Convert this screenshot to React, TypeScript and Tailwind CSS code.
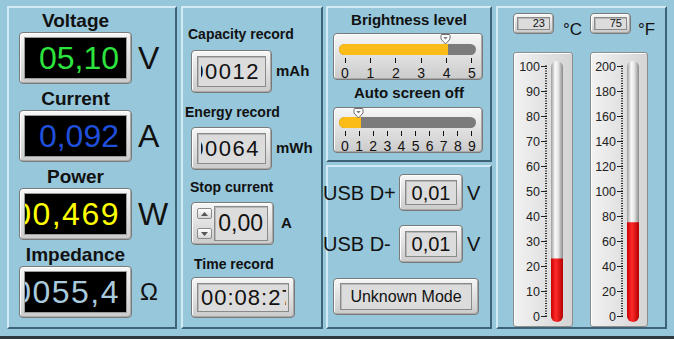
const font = "font-['Liberation_Sans',Arial,sans-serif]";

function Panel({ className = "", children }: { className?: string; children?: React.ReactNode }) {
  return (
    <div
      className={`bg-[#97c7db] border-2 border-t-[#d2eaf4] border-l-[#d2eaf4] border-r-[#3d6377] border-b-[#3d6377] ${className}`}
    >
      {children}
    </div>
  );
}

// grey bevelled frame used by every control
function Frame({ className = "", children }: { className?: string; children?: React.ReactNode }) {
  return (
    <div
      className={`rounded-[4px] border border-[#7a7a7a] bg-linear-to-b from-[#f6f6f6] to-[#cbcbcb] shadow-[inset_1px_1px_0_#ffffff,inset_-1px_-1px_0_#a9a9a9] ${className}`}
    >
      {children}
    </div>
  );
}

const field = "border border-[#8a8a8a] bg-[#dcdcdc] shadow-[inset_1px_1px_0_#b9b9b9]";

function Reading({ label, value, unit, color, unitClass, pad = "pr-[7px]" }: {
  label: string;
  value: string;
  unit: string;
  color: string;
  unitClass: string;
  pad?: string;
}) {
  return (
    <div className="flex flex-col mb-[4px]">
      <div className="w-[113px] text-center text-[19px] font-bold leading-[22px] text-[#111]">{label}</div>
      <div className="flex items-center">
        <Frame className="w-[113px] h-[52px] p-[4px]">
          <div className={`h-full border border-[#9c9c9c] bg-black flex items-center justify-end overflow-hidden ${pad}`}>
            <span className={`text-[32px] leading-none whitespace-nowrap ${color}`}>{value}</span>
          </div>
        </Frame>
        <span className={`ml-[6px] leading-none text-[#111] ${unitClass}`}>{unit}</span>
      </div>
    </div>
  );
}

function ValueBox({ value, w, h, align, text, pad }: {
  value: string;
  w: string;
  h: string;
  align: string;
  text: string;
  pad: string;
}) {
  return (
    <Frame className={`${w} ${h} p-[5px]`}>
      <div className={`h-full ${field} flex`}>
        <div className={`flex-1 overflow-hidden flex items-center ${align} ${pad}`}>
          <span className={`${text} leading-none whitespace-nowrap text-[#111]`}>{value}</span>
        </div>
      </div>
    </Frame>
  );
}

function Thumb() {
  return (
    <svg width="11" height="11" viewBox="0 0 11 11">
      <path d="M1 1.5 Q1 0.5 2 0.5 H9 Q10 0.5 10 1.5 V5 L5.5 10 L1 5 Z" fill="#ffffff" stroke="#6e6e6e" strokeWidth="1" />
      <path d="M3.3 3 H7.7 L5.5 5.6 Z" fill="#7a7a7a" />
    </svg>
  );
}

function Slider({ count, fill, thumb, trackTop, h }: {
  count: number;
  fill: string;
  thumb: string;
  trackTop: string;
  h: string;
}) {
  const labels = Array.from({ length: count }, (_, i) => i);
  return (
    <Frame className={`relative ml-[5px] w-[150px] ${h}`}>
      <div className={`ml-[5px] ${trackTop} w-[137px] h-[11px] rounded-full bg-[#7b7b7b] overflow-hidden`}>
        <div className={`h-full ${fill} bg-[#fbbc17]`} />
      </div>
      <div className="ml-[7px] mr-[6px] mt-[3px] flex justify-between">
        {labels.map((n) => (
          <div key={n} className="w-[8px] flex flex-col items-center">
            <div className="w-px h-[5px] bg-[#111]" />
            <span className="mt-[3px] text-[14px] leading-[14px] text-[#111]">{n}</span>
          </div>
        ))}
      </div>
      <div className={`absolute top-0 ${thumb}`}>
        <Thumb />
      </div>
    </Frame>
  );
}

function Thermo({ id, max, value, labelX }: { id: string; max: number; value: number; labelX: number }) {
  const y0 = 263;
  const span = 250;
  const tx = labelX + 11;
  const top = y0 - (value / max) * span;
  const labels = Array.from({ length: 11 }, (_, i) => i);
  const minors = Array.from({ length: 101 }, (_, i) => i);
  return (
    <svg width="100%" height="100%" className="block">
      <defs>
        <linearGradient id={`${id}-tube`} x1="0" x2="1" y1="0" y2="0">
          <stop offset="0" stopColor="#9c9c9c" />
          <stop offset="0.35" stopColor="#fafafa" />
          <stop offset="0.6" stopColor="#e6e6e6" />
          <stop offset="1" stopColor="#8a8a8a" />
        </linearGradient>
        <linearGradient id={`${id}-red`} x1="0" x2="1" y1="0" y2="0">
          <stop offset="0" stopColor="#c80000" />
          <stop offset="0.4" stopColor="#ff2b2b" />
          <stop offset="1" stopColor="#b50000" />
        </linearGradient>
      </defs>
      {minors.map((i) => (
        <line key={i} x1={labelX + 5} x2={labelX + 7} y1={y0 - i * 2.5} y2={y0 - i * 2.5} stroke="#222" strokeWidth="1" />
      ))}
      {labels.map((i) => (
        <g key={i}>
          <line x1={labelX + 1} x2={labelX + 7} y1={y0 - i * 25 + 0.5} y2={y0 - i * 25 + 0.5} stroke="#222" strokeWidth="1" />
          <text
            x={labelX}
            y={y0 - i * 25 + 1}
            textAnchor="end"
            dominantBaseline="central"
            fontSize="12.5"
            fill="#222"
            fontFamily="Liberation Sans, Arial, sans-serif"
          >
            {(max / 10) * i}
          </text>
        </g>
      ))}
      <rect x={tx} y={8} width={12} height={261} rx={6} fill={`url(#${id}-tube)`} />
      <path d={`M${tx} ${top} H${tx + 12} V263 A6 6 0 0 1 ${tx} 263 Z`} fill={`url(#${id}-red)`} />
    </svg>
  );
}

function TempBox({ value }: { value: string }) {
  return (
    <Frame className="w-[41px] h-[21px] p-[3px] rounded-[3px]">
      <div className={`h-full ${field} flex items-center justify-end pr-[4px]`}>
        <span className="text-[11px] leading-none text-[#111]">{value}</span>
      </div>
    </Frame>
  );
}

const thermoBody =
  "h-[275px] rounded-[3px] border border-[#8d8d8d] bg-linear-to-r from-[#f2f2f2] to-[#d4d4d4] shadow-[inset_1px_1px_0_#ffffff]";

export default function App() {
  return (
    <div className={`w-[674px] h-[339px] bg-[#97c7db] flex flex-col overflow-hidden ${font}`}>
      <div className="flex h-[336px] pt-[6px] pl-[7px]">
        <Panel className="w-[170px] h-[323px] pl-[10px] pt-[2px]">
          <Reading label="Voltage" value="05,10" unit="V" color="text-[#2de33d]" unitClass="text-[32px]" />
          <Reading label="Current" value="0,092" unit="A" color="text-[#1f4fdb]" unitClass="text-[32px]" />
          <Reading
            label="Power"
            value="00,469"
            unit="W"
            color="text-[#ffff00] tracking-[1.5px]"
            unitClass="text-[32px]"
            pad="pr-[6px]"
          />
          <Reading
            label="Impedance"
            value="0055,4"
            unit="Ω"
            color="text-[#a9c9dc] tracking-[1.5px]"
            unitClass="text-[24px] ml-[8px]"
            pad="pr-[6px]"
          />
        </Panel>

        <Panel className="ml-[4px] w-[142px] h-[323px] flex flex-col">
          <div className="ml-[5px] mt-[18px] text-[14px] font-bold leading-[16px] text-[#111]">Capacity record</div>
          <div className="ml-[8px] mt-[8px] flex items-center">
            <ValueBox
              value="000012"
              w="w-[81px]"
              h="h-[43px]"
              align="justify-end"
              text="text-[22px] tracking-[1.5px]"
              pad="ml-[3px] pr-[5px]"
            />
            <span className="ml-[4px] text-[15px] font-bold text-[#111]">mAh</span>
          </div>
          <div className="ml-[2px] mt-[11px] text-[14px] font-bold leading-[16px] text-[#111]">Energy record</div>
          <div className="ml-[8px] mt-[7px] flex items-center">
            <ValueBox
              value="000064"
              w="w-[81px]"
              h="h-[43px]"
              align="justify-end"
              text="text-[22px] tracking-[1.5px]"
              pad="ml-[3px] pr-[5px]"
            />
            <span className="ml-[4px] text-[15px] font-bold text-[#111]">mWh</span>
          </div>
          <div className="ml-[7px] mt-[9px] text-[14px] font-bold leading-[16px] text-[#111]">Stop current</div>
          <div className="ml-[8px] mt-[7px] flex items-center">
            <Frame className="w-[83px] h-[43px] px-[5px] py-[3px] flex">
              <div className="w-[15px] flex flex-col justify-between py-[2px]">
                <div className="h-[11px] rounded-[2px] border border-[#8a8a8a] bg-linear-to-b from-[#ffffff] to-[#d6d6d6] flex items-center justify-center">
                  <svg width="7" height="4" viewBox="0 0 7 4"><path d="M0 4 L3.5 0 L7 4 Z" fill="#555" /></svg>
                </div>
                <div className="h-[11px] rounded-[2px] border border-[#8a8a8a] bg-linear-to-b from-[#ffffff] to-[#d6d6d6] flex items-center justify-center">
                  <svg width="7" height="4" viewBox="0 0 7 4"><path d="M0 0 L7 0 L3.5 4 Z" fill="#555" /></svg>
                </div>
              </div>
              <div className={`ml-[2px] flex-1 ${field} flex items-center justify-end pr-[4px]`}>
                <span className="text-[23px] leading-none text-[#111]">0,00</span>
              </div>
            </Frame>
            <span className="ml-[7px] text-[15px] font-bold text-[#111]">A</span>
          </div>
          <div className="ml-[11px] mt-[11px] text-[14px] font-bold leading-[16px] text-[#111]">Time record</div>
          <div className="ml-[8px] mt-[5px]">
            <ValueBox
              value="00:08:27"
              w="w-[104px]"
              h="h-[41px]"
              align="justify-start"
              text="text-[22px] tracking-[1px]"
              pad="ml-[3px] mr-[2px]"
            />
          </div>
        </Panel>

        <div className="ml-[3px] w-[166px] flex flex-col gap-[3px]">
          <Panel className="h-[156px] flex flex-col">
            <div className="mt-[3px] text-center text-[15px] font-bold leading-[18px] text-[#111]">Brightness level</div>
            <div className="mt-[4px]">
              <Slider count={6} fill="w-[109px]" thumb="left-[106px]" trackTop="mt-[10px]" h="h-[47px]" />
            </div>
            <div className="mt-[4px] text-center text-[15px] font-bold leading-[18px] text-[#111]">Auto screen off</div>
            <div className="mt-[5px]">
              <Slider count={10} fill="w-[22px]" thumb="left-[19px]" trackTop="mt-[9px]" h="h-[46px]" />
            </div>
          </Panel>
          <Panel className="h-[164px] flex flex-col">
            <div className="mt-[7px] ml-[-5px] flex items-center">
              <span className="w-[76px] text-[20px] leading-none text-[#111]">USB D+</span>
              <ValueBox value="0,01" w="w-[64px]" h="h-[37px]" align="justify-center" text="text-[20px]" pad="" />
              <span className="ml-[4px] text-[20px] leading-none text-[#111]">V</span>
            </div>
            <div className="mt-[14px] ml-[-5px] flex items-center">
              <span className="w-[76px] text-[20px] leading-none text-[#111]">USB D-</span>
              <ValueBox value="0,01" w="w-[64px]" h="h-[38px]" align="justify-center" text="text-[20px]" pad="" />
              <span className="ml-[4px] text-[20px] leading-none text-[#111]">V</span>
            </div>
            <Frame className="mt-[15px] ml-[5px] w-[146px] h-[37px] px-[6px] py-[4px]">
              <div className={`h-full ${field} flex items-center justify-center`}>
                <span className="text-[16px] leading-none text-[#111]">Unknown Mode</span>
              </div>
            </Frame>
          </Panel>
        </div>

        <Panel className="ml-[4px] w-[171px] h-[323px] flex flex-col">
          <div className="mt-[5px] ml-[15px] flex items-start">
            <div className="w-[77px] flex items-start">
              <TempBox value="23" />
              <span className="ml-[9px] mt-[8px] text-[17px] leading-[17px] text-[#111]">°C</span>
            </div>
            <TempBox value="75" />
            <span className="ml-[7px] mt-[8px] text-[17px] leading-[17px] text-[#111]">°F</span>
          </div>
          <div className="mt-[14px] ml-[15px] flex">
            <div className={`w-[60px] ${thermoBody}`}>
              <Thermo id="c" max={100} value={23} labelX={26} />
            </div>
            <div className={`ml-[17px] w-[58px] ${thermoBody}`}>
              <Thermo id="f" max={200} value={75} labelX={25} />
            </div>
          </div>
        </Panel>
      </div>
      <div className="h-[3px] bg-[#2e393e]" />
    </div>
  );
}
